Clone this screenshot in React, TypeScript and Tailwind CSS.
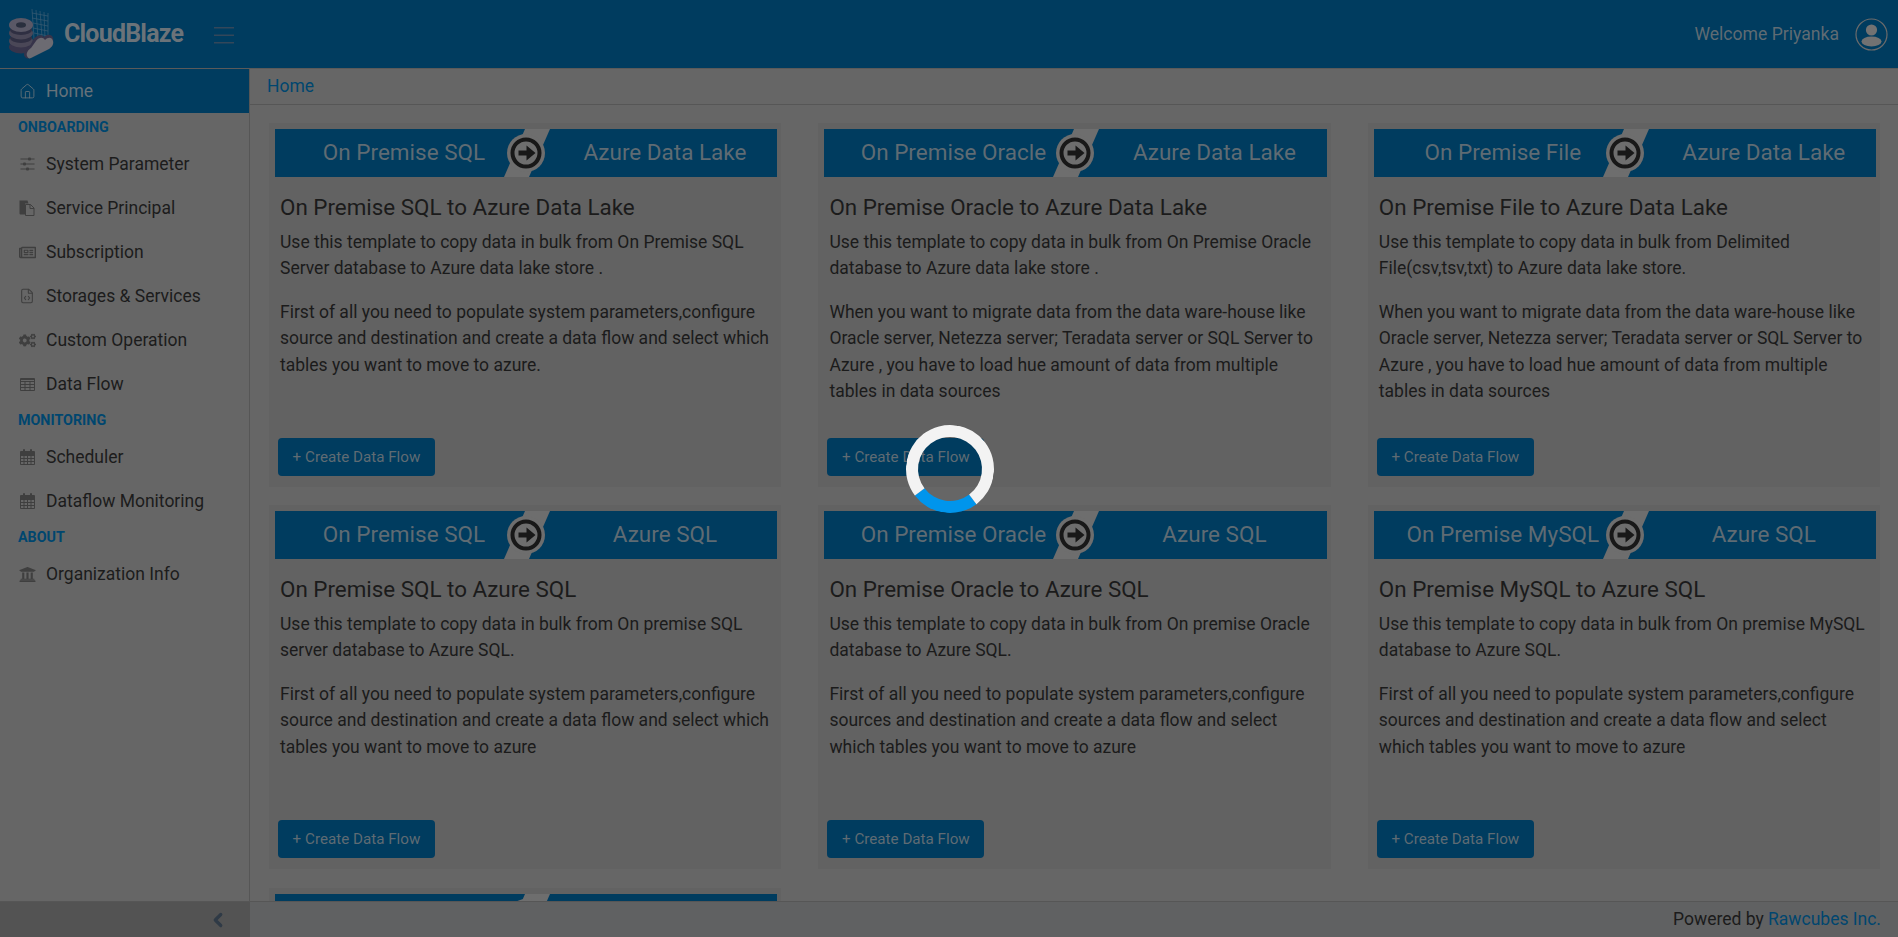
import React from "react";
import { House, ChevronLeft, FileCode } from "lucide-react";
import { FaCogs, FaUniversity, FaRegNewspaper } from "react-icons/fa";

function Logo() {
  return (
    <svg width="60" height="60" viewBox="0 0 60 60" className="shrink-0">
      <g stroke="#3a5b72" strokeWidth="0.7" fill="none">
        <path d="M32 4l2 30M36 5l2 28M40 6l2 26M44 7l1 26M48 8v24M32 8l16 3M32 13l16 3M33 18l15 3M33 23l15 3M34 28l14 3" />
      </g>
      <ellipse cx="21" cy="42" rx="12" ry="6.5" fill="#37344a" />
      <ellipse cx="21" cy="36" rx="12" ry="6.5" fill="#4a4757" />
      <ellipse cx="21" cy="33" rx="11" ry="5" fill="#2f2f42" />
      <ellipse cx="21" cy="28" rx="12" ry="6.5" fill="#4a4757" />
      <ellipse cx="21" cy="25" rx="11" ry="5" fill="#2f2f42" />
      <ellipse cx="21" cy="20" rx="12" ry="7" fill="#5a5866" />
      <ellipse cx="21" cy="20" rx="5" ry="2.8" fill="#2a2f3e" />
      <path d="M24 50c0-4 3-6 6-9l3-6c3-5 9-6 11-3 3-3 8-3 9 1 1 4-1 7-4 9L30 53c-3 1-5 0-6-3z" fill="#37344a" />
      <path d="M27 51c-1-3 1-6 4-8l5-7c3-4 7-4 9-1 3-3 7-3 8 1 1 3-1 6-4 8L31 53c-2 1-3 0-4-2z" fill="#6c6b72" />
    </svg>
  );
}

const ic = "#3f3f3f";
const SlidersIcon = () => (
  <svg width="15" height="14" viewBox="0 0 15 14" fill={ic}>
    <rect x="0.5" y="1.5" width="14" height="1" />
    <rect x="0.5" y="6.5" width="14" height="1" />
    <rect x="0.5" y="11.5" width="14" height="1" />
    <rect x="8" y="0.5" width="3" height="3" rx="1" />
    <rect x="3" y="5.5" width="3" height="3" rx="1" />
    <rect x="6" y="10.5" width="3" height="3" rx="1" />
  </svg>
);
const PagesIcon = () => (
  <svg width="16" height="16" viewBox="0 0 16 16">
    <path d="M0.5 0.5h8l1 3H6v11H2c-1 0-1.5-.5-1.5-1.5z" fill={ic} />
    <path d="M6.5 4.5h5l3.5 3.5v7.5H6.5zM11 4.5v4h4" fill="none" stroke={ic} strokeWidth="1" />
  </svg>
);
const TableIcon = () => (
  <svg width="15" height="13" viewBox="0 0 15 13" fill="none" stroke={ic} strokeWidth="1">
    <path d="M.5 .5h14v12H.5zM.5 3.5h14M.5 6.5h14M.5 9.5h14M5 3.5v9M10 3.5v9" />
    <path d="M.5 1.5h14" />
  </svg>
);
const CalIcon = () => (
  <svg width="15" height="16" viewBox="0 0 15 16" fill="none" stroke={ic} strokeWidth="1">
    <path d="M.5 2.5h14v13H.5zM.5 6.5h14M.5 9.5h14M.5 12.5h14M4 6.5v9M7.5 6.5v9M11 6.5v9" />
    <rect x="3" y="0" width="2" height="5" rx="1" fill={ic} stroke="none" />
    <rect x="10" y="0" width="2" height="5" rx="1" fill={ic} stroke="none" />
    <rect x="1" y="3" width="13" height="3" fill={ic} stroke="none" />
  </svg>
);

function NavItem({ icon, label }: { icon: React.ReactNode; label: string }) {
  return (
    <div className="h-[44px] flex items-center pl-[18px] gap-[10px] text-[17.5px] text-[#1c1c1c]">
      <span className="w-[18px] flex justify-center">{icon}</span>
      <span>{label}</span>
    </div>
  );
}
function NavHead({ label }: { label: string }) {
  return <div className="h-[29px] flex items-center pl-[18px] text-[14.3px] font-bold text-[#00466f]">{label}</div>;
}

function Banner({ left, right }: { left: string; right: string }) {
  return (
    <div className="relative h-[48px] bg-[#003c5f] flex items-center text-[22.5px] text-[#5f6b73]">
      <span className="w-[258px] text-center whitespace-nowrap">{left}</span>
      <span className="ml-[32px] w-[200px] text-center whitespace-nowrap">{right}</span>
      <svg width="60" height="48" viewBox="0 0 60 48" className="absolute left-[221px] top-0">
        <polygon points="29,0 54,0 33,48 8,48" fill="#6e6e6e" />
        <circle cx="30" cy="24" r="19" fill="#6e6e6e" />
        <circle cx="30" cy="24" r="13.5" fill="#6e6e6e" stroke="#181818" strokeWidth="4" />
        <path d="M22.5 21.5h8v-5l9 7.5-9 7.5v-5h-8z" fill="#181818" />
      </svg>
    </div>
  );
}

type Card = { left: string; right: string; title: string; p1: string; p2: string };

function TemplateCard({ c }: { c: Card }) {
  return (
    <div className="h-[364px] bg-[#626262] pl-[6px] pr-[4px] pt-[6px] flex flex-col">
      <Banner left={c.left} right={c.right} />
      <div className="px-[5px] flex-1 flex flex-col text-[#1b1b1b]">
        <h3 className="mt-[15px] text-[22.4px] leading-[30px]">{c.title}</h3>
        <p className="text-[17.5px] leading-[26.25px] mt-[7px]">{c.p1}</p>
        <p className="text-[17.5px] leading-[26.25px] mt-[17.5px]">{c.p2}</p>
      </div>
      <div className="pb-[11px] mt-auto">
        <div className="w-[157px] h-[38px] ml-[3px] rounded-[4px] bg-[#003c5f] text-[#5f6b73] text-[15.2px] flex items-center justify-center">
          + Create Data Flow
        </div>
      </div>
    </div>
  );
}

const longP = "When you want to migrate data from the data ware-house like Oracle server, Netezza server; Teradata server or SQL Server to Azure , you have to load hue amount of data from multiple tables in data sources";
const firstP = "First of all you need to populate system parameters,configure source and destination and create a data flow and select which tables you want to move to azure";
const sourcesP = "First of all you need to populate system parameters,configure sources and destination and create a data flow and select which tables you want to move to azure";

const cards: Card[] = [
  { left: "On Premise SQL", right: "Azure Data Lake", title: "On Premise SQL to Azure Data Lake", p1: "Use this template to copy data in bulk from On Premise SQL Server database to Azure data lake store .", p2: firstP + "." },
  { left: "On Premise Oracle", right: "Azure Data Lake", title: "On Premise Oracle to Azure Data Lake", p1: "Use this template to copy data in bulk from On Premise Oracle database to Azure data lake store .", p2: longP },
  { left: "On Premise File", right: "Azure Data Lake", title: "On Premise File to Azure Data Lake", p1: "Use this template to copy data in bulk from Delimited File(csv,tsv,txt) to Azure data lake store.", p2: longP },
  { left: "On Premise SQL", right: "Azure SQL", title: "On Premise SQL to Azure SQL", p1: "Use this template to copy data in bulk from On premise SQL server database to Azure SQL.", p2: firstP },
  { left: "On Premise Oracle", right: "Azure SQL", title: "On Premise Oracle to Azure SQL", p1: "Use this template to copy data in bulk from On premise Oracle database to Azure SQL.", p2: sourcesP },
  { left: "On Premise MySQL", right: "Azure SQL", title: "On Premise MySQL to Azure SQL", p1: "Use this template to copy data in bulk from On premise MySQL database to Azure SQL.", p2: sourcesP },
];

export default function App() {
  return (
    <div className="relative h-[937px] w-[1898px] overflow-hidden bg-[#666666] flex flex-col font-['Roboto',sans-serif]">
      <header className="h-[69px] shrink-0 bg-[#003c5f] border-b border-[#5a5a5a] flex items-center">
        <div className="mt-[2px] shrink-0"><Logo /></div>
        <span className="ml-[4px] w-[150px] text-[25px] font-bold tracking-[-0.8px] text-[#6b7379]">CloudBlaze</span>
        <svg width="20" height="17" viewBox="0 0 20 17" className="mt-[2px]" fill="#33475a">
          <rect y="0" width="20" height="1.5" />
          <rect y="7.5" width="20" height="1.5" />
          <rect y="15" width="20" height="1.5" />
        </svg>
        <span className="ml-auto text-[17.6px] text-[#5f6b73]">Welcome Priyanka</span>
        <svg width="33" height="33" viewBox="0 0 33 33" className="ml-[16px] mr-[10px]">
          <circle cx="16.5" cy="16.5" r="15.5" fill="none" stroke="#6b6b6b" strokeWidth="1.2" />
          <circle cx="16.5" cy="12" r="5.6" fill="#727272" />
          <ellipse cx="16.5" cy="23.5" rx="10" ry="5" fill="#727272" />
        </svg>
      </header>
      <div className="flex-1 min-h-0 flex">
        <aside className="w-[250px] shrink-0 border-r border-[#565656] flex flex-col">
          <div className="h-[44px] bg-[#003c5f] flex items-center pl-[18px] gap-[10px] text-[17.5px] text-[#66727a]">
            <span className="w-[18px] flex justify-center"><House size={17} strokeWidth={1.2} /></span>
            <span>Home</span>
          </div>
          <NavHead label="ONBOARDING" />
          <NavItem icon={<SlidersIcon />} label="System Parameter" />
          <NavItem icon={<PagesIcon />} label="Service Principal" />
          <NavItem icon={<FaRegNewspaper size={17} color={ic} />} label="Subscription" />
          <NavItem icon={<FileCode size={16} color={ic} strokeWidth={1.6} />} label="Storages & Services" />
          <NavItem icon={<FaCogs size={17} color={ic} />} label="Custom Operation" />
          <NavItem icon={<TableIcon />} label="Data Flow" />
          <NavHead label="MONITORING" />
          <NavItem icon={<CalIcon />} label="Scheduler" />
          <NavItem icon={<CalIcon />} label="Dataflow Monitoring" />
          <NavHead label="ABOUT" />
          <NavItem icon={<FaUniversity size={17} color={ic} />} label="Organization Info" />
        </aside>
        <main className="flex-1 min-w-0 flex flex-col">
          <div className="h-[36px] shrink-0 border-b border-[#565656] flex items-center pl-[17px] text-[17.5px] text-[#00466f]">Home</div>
          <div className="flex-1 min-h-0 overflow-hidden pl-[19px] pr-[18px] pt-[18px] grid grid-cols-3 gap-x-[37.25px] gap-y-[18px] content-start">
            {cards.map((c) => <TemplateCard key={c.title} c={c} />)}
            <div className="h-[364px] mt-[1px] bg-[#626262] pl-[6px] pr-[4px] pt-[6px]">
              <Banner left="" right="" />
            </div>
          </div>
        </main>
      </div>
      <footer className="h-[36px] shrink-0 border-t border-[#565656] bg-[#606162] flex items-center">
        <div className="w-[250px] h-full bg-[#535353] flex items-center justify-end pr-[21px]">
          <ChevronLeft className="text-[#2f3a46]" size={22} strokeWidth={3.5} />
        </div>
        <div className="ml-auto pr-[17px] text-[17.5px] text-[#1b1b1b]">Powered by <span className="text-[#00466f]">Rawcubes Inc.</span></div>
      </footer>
      <div className="absolute left-[906px] top-[425px] w-[88px] h-[88px] rounded-full border-[12px] border-[#f3f3f3] border-b-[#0095ec] rotate-[8deg]" />
    </div>
  );
}
